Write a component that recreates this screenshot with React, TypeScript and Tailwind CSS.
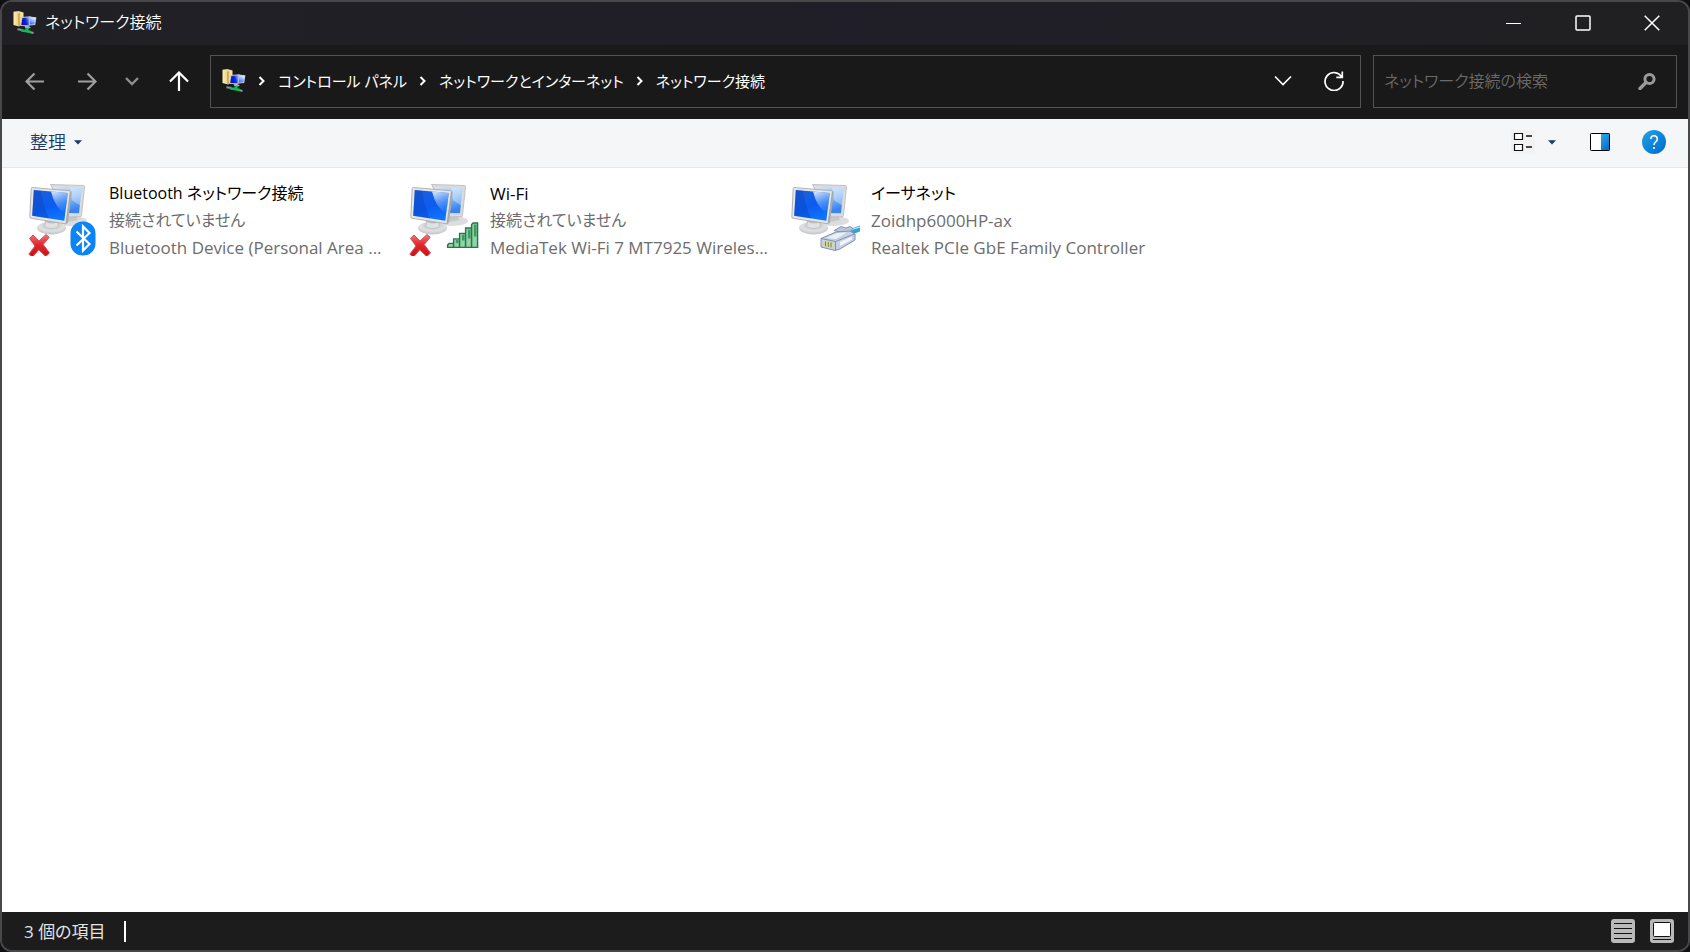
import type { ReactNode } from 'react';

function FolderNetworkIcon() {
  return (
    <svg viewBox="0 0 24 24" className="size-6 shrink-0" aria-hidden="true">
      <defs>
        <linearGradient id="fn-folder" x1="0" y1="0" x2="1" y2="0">
          <stop offset="0" stopColor="#fff0b4" />
          <stop offset="0.5" stopColor="#ecd084" />
          <stop offset="1" stopColor="#fbe9ab" />
        </linearGradient>
        <linearGradient id="fn-screen" x1="0" y1="0.6" x2="1" y2="0.3">
          <stop offset="0" stopColor="#0a10a0" />
          <stop offset="0.55" stopColor="#1226dc" />
          <stop offset="1" stopColor="#8fb2ff" />
        </linearGradient>
        <linearGradient id="fn-back" x1="0" y1="1" x2="0.4" y2="0">
          <stop offset="0" stopColor="#2f56e6" />
          <stop offset="1" stopColor="#d4e4ff" />
        </linearGradient>
      </defs>
      <path d="M.5.800 5.500 0l5 1.600v11L6 15.400.5 14z" fill="url(#fn-folder)" />
      <path d="M5.200 3 6.600 2l.2 12.600-1.400.4z" fill="#c79f47" />
      <path d="m16 5.600 7.400.6-1.200 7.800-6.200.4z" fill="#c4d2e8" />
      <path d="m16.500 6.600 6 .4-1 6.200-5 .4z" fill="url(#fn-back)" />
      <path d="m8.600 6 9-.8-1.200 9.600-9 .2z" fill="#b9c6e6" />
      <path d="m9.400 6.900 7.200-.6-1 7.600-7.300.2z" fill="url(#fn-screen)" />
      <path d="m11.500 15 4-.2 2.500 2-5.500.6z" fill="#a9b0b8" />
      <path d="m4.400 18.200 5 .8M15.500 20.800l5 1.200" stroke="#8a9499" strokeWidth="2" />
      <path d="m9 19.500 8 1.200" stroke="#0bbf55" strokeWidth="2.600" strokeLinecap="round" />
      <path d="m12.500 19.500 3.500-2.500" stroke="#0bbf55" strokeWidth="2" />
    </svg>
  );
}

function ComputersIcon({ id, children }: { id: string; children: ReactNode }) {
  return (
    <svg viewBox="0 0 76 76" className="size-19 shrink-0" aria-hidden="true">
      <defs>
        <linearGradient id={`${id}-screen`} x1="0.1" y1="0" x2="0.5" y2="1">
          <stop offset="0" stopColor="#1d5fdc" />
          <stop offset="0.6" stopColor="#0c5cf0" />
          <stop offset="1" stopColor="#0e74ff" />
        </linearGradient>
        <linearGradient id={`${id}-glare`} x1="0.2" y1="0" x2="0.5" y2="1">
          <stop offset="0" stopColor="#e4f1ff" stopOpacity="0.9" />
          <stop offset="0.9" stopColor="#6aaeff" stopOpacity="0.25" />
          <stop offset="1" stopColor="#6aaeff" stopOpacity="0" />
        </linearGradient>
        <linearGradient id={`${id}-back`} x1="0" y1="0" x2="0.4" y2="1">
          <stop offset="0" stopColor="#d4eafd" />
          <stop offset="0.5" stopColor="#8fc2fb" />
          <stop offset="1" stopColor="#3b83ee" />
        </linearGradient>
        <radialGradient id={`${id}-base`} cx="0.5" cy="0.3" r="0.7">
          <stop offset="0" stopColor="#b4b6b8" />
          <stop offset="0.6" stopColor="#e0e1e2" />
          <stop offset="1" stopColor="#bfc1c3" />
        </radialGradient>
      </defs>
      <g transform="translate(0 1)">
        <ellipse cx="43" cy="40" rx="16" ry="5" fill="#dcdddf" />
        <path d="m38 33 9-1 3 7-10 2z" fill="#c6c8ca" />
        <path d="m22.500 3.500 33 1q1.200 0 1 1.500L53.500 34.500q-.2 1.200-1.400 1.200L39 36z" fill="#d9dbdc" stroke="#b5b8ba" strokeWidth="0.800" />
        <path d="m25 6 28.500 1.200-2.500 25L38 32z" fill={`url(#${id}-back)`} />
        <path d="m42 6.700 11.500.5-1.600 17-8-5z" fill="#fff" opacity="0.350" />
        <ellipse cx="23.500" cy="47" rx="14.500" ry="6.500" fill={`url(#${id}-base)`} />
        <path d="m17 38 13 1 .5 7q-6 3.500-14 0z" fill="#bdbfc1" />
        <path d="M18 41q7 3 11 0l1 4.500q-6 3-13 0z" fill="#e0e1e2" />
        <path d="m4.500 6.500 37.500 3.300q1.400.2 1.200 1.700L39.500 41.500q-.2 1.400-1.700 1.300L3 37.300q-1.300-.2-1.200-1.500L3.200 7.700Q3.300 6.500 4.500 6.500z" fill="#e5e6e6" stroke="#a9acae" strokeWidth="0.900" />
        <path d="m42 10 1.400 1.500L39.500 41.500l-2 1.200z" fill="#a6a9ac" />
        <path d="m5.800 9 34 3-3.500 27.800L4.200 34.800z" fill={`url(#${id}-screen)`} />
        <path d="M5.800 9 13 9.700Q15 24 21 37.400L4.200 34.800z" fill="#0a3fb8" opacity="0.350" />
        <path d="m23 10.500 16.800 1.500-2.600 20.500Q27 27 23 10.500z" fill={`url(#${id}-glare)`} />
      </g>
      {children}
    </svg>
  );
}

function RedCross({ id }: { id: string }) {
  return (
    <g>
      <defs>
        <linearGradient id={`${id}-cross`} x1="0" y1="0" x2="0" y2="1">
          <stop offset="0" stopColor="#f0767a" />
          <stop offset="0.450" stopColor="#e2272c" />
          <stop offset="1" stopColor="#c80d16" />
        </linearGradient>
      </defs>
      <path
        d="m1.500 58.500 3.500-3.500 6 6 7-6.500 3.200 2.800-6 7.200 6.300 8.500-3.700 3.500-7-6.700L4.500 77l-3.700-2.800L7 66z"
        fill={`url(#${id}-cross)`}
        stroke="#c9555a"
        strokeWidth="1"
        strokeLinejoin="round"
      />
    </g>
  );
}

function BluetoothBadge() {
  return (
    <g>
      <rect x="42.500" y="41.500" width="25" height="34" rx="12" fill="#0a84f8" />
      <path d="m48.500 51.500 13 12.500-6.500 6.500V46.500l6.500 6.500-13 12.500" fill="none" stroke="#fff" strokeWidth="2.200" />
    </g>
  );
}

function SignalBadge() {
  return (
    <g fill="#8fd3a6" stroke="#27764a" strokeWidth="1.400" transform="translate(0 -2)">
      <path d="M38.600 69.400V67l1.500-1.600h4.500v4z" />
      <path d="M44.600 69.400v-8.500h6v8.500z" />
      <path d="M50.600 69.400v-14h6v14z" />
      <path d="M56.600 69.400V50h6v19.400z" />
      <path d="M62.600 69.400V46.500l1.500-1.500h4.500v24.400z" />
      <path d="M48.200 62v3M54.200 56.500v6M60.200 51.500v9M66.200 46.500v12" stroke="#3f9a66" strokeWidth="2.600" />
    </g>
  );
}

function CableBadge() {
  return (
    <g strokeLinejoin="round" transform="translate(0 -1)">
      <path d="M56 53q7-5 14-6.500v6q-6 1.500-10 5z" fill="#2fa5d6" />
      <path d="M58 52.500q6-3.500 12-4.500" stroke="#a8e2f5" strokeWidth="1.600" fill="none" />
      <path d="m44 51.500 7-4 5 1.500 4-1.500 3 2-5 6z" fill="#b9c6da" stroke="#7f8ea9" strokeWidth="0.900" />
      <path d="m31 59.500 15-6.500 14-1 5 3v6L50 70l-5 1.500L31 68z" fill="#c5d1e3" stroke="#8291ad" strokeWidth="1" />
      <path d="m31 59.500 14.500 3L64.500 55M45.500 62.500V71" stroke="#8291ad" strokeWidth="1" fill="none" />
      <path d="m36 59 11-5 10-.5-11 6.500z" fill="#eaf0f8" />
      <path d="m50 63 12-5.500v3L50 67z" fill="#f2f6fb" />
      <path d="m33 62 10.500 2v5L33 66.500z" fill="#ddd98c" />
      <path d="M35.500 62.500v4.700M38.300 63v4.800M41 63.500v4.800" stroke="#7d7c48" strokeWidth="1" />
    </g>
  );
}

function Chevron() {
  return (
    <svg viewBox="0 0 8 12" className="h-3 w-2 shrink-0" aria-hidden="true">
      <path d="m1.500 2 4 4-4 4" fill="none" stroke="#fff" strokeWidth="2" />
    </svg>
  );
}

function Caret() {
  return (
    <svg viewBox="0 0 8 5" className="h-[5px] w-2" aria-hidden="true">
      <path d="M0 .3h8L4 4.500z" fill="#1e3a66" />
    </svg>
  );
}

const connections = [
  {
    id: 'bluetooth',
    name: 'Bluetooth ネットワーク接続',
    nameSize: 'text-[16px]',
    status: '接続されていません',
    statusSize: 'text-[16px]',
    device: 'Bluetooth Device (Personal Area ...',
    badge: <><RedCross id="bluetooth" /><BluetoothBadge /></>,
  },
  {
    id: 'wifi',
    name: 'Wi-Fi',
    nameSize: 'text-[17px]',
    status: '接続されていません',
    statusSize: 'text-[16px]',
    device: 'MediaTek Wi-Fi 7 MT7925 Wireles...',
    badge: <><RedCross id="wifi" /><SignalBadge /></>,
  },
  {
    id: 'ethernet',
    name: 'イーサネット',
    nameSize: 'text-[16px]',
    status: 'Zoidhp6000HP-ax',
    statusSize: 'text-[17px]',
    device: 'Realtek PCIe GbE Family Controller',
    badge: <CableBadge />,
  },
];

const crumbs = ['コントロール パネル', 'ネットワークとインターネット', 'ネットワーク接続'];

export default function App() {
  return (
    <div className="h-screen bg-[#101012] font-['Open_Sans','Noto_Sans_CJK_JP',sans-serif] text-[17px] leading-[27px] [font-feature-settings:'palt']">
      <div className="flex h-full flex-col overflow-hidden rounded-xl border-2 border-[#48484a] bg-[#191919]">
        <header className="flex h-[43px] shrink-0 items-center bg-linear-to-r from-[#202024] via-[#201f29] to-[#202022] pr-[2px] pb-[2px] pl-[11px] text-[16px] text-white">
          <FolderNetworkIcon />
          <h1 className="ml-2 grow font-[350]">ネットワーク接続</h1>
          <button type="button" aria-label="最小化" className="flex h-full w-[69px] items-center justify-center">
            <svg viewBox="0 0 16 16" className="size-4"><path d="M0 8.500h15" stroke="#fff" /></svg>
          </button>
          <button type="button" aria-label="最大化" className="flex h-full w-[69px] items-center justify-center">
            <svg viewBox="0 0 16 16" className="size-4"><rect x="1" y="1" width="14" height="14" rx="1" fill="none" stroke="#fff" strokeWidth="1.500" /></svg>
          </button>
          <button type="button" aria-label="閉じる" className="flex h-full w-[69px] items-center justify-center">
            <svg viewBox="0 0 16 16" className="size-4"><path d="m.7.700 14.600 14.600M15.300.7.700 15.300" stroke="#fff" strokeWidth="1.500" /></svg>
          </button>
        </header>

        <nav className="flex h-[74px] shrink-0 items-center pr-[11px] pb-[2px] pl-[23px] text-white" aria-label="ナビゲーション">
          <button type="button" aria-label="戻る">
            <svg viewBox="0 0 20 20" className="size-5"><path d="M19 10.500H2M9.500 2.500l-8 8 8 8" fill="none" stroke="#a0a0a0" strokeWidth="2.200" /></svg>
          </button>
          <button type="button" aria-label="進む" className="ml-8">
            <svg viewBox="0 0 20 20" className="size-5"><path d="M1 10.500h17M10.500 2.500l8 8-8 8" fill="none" stroke="#a0a0a0" strokeWidth="2.200" /></svg>
          </button>
          <button type="button" aria-label="最近表示した場所" className="ml-7">
            <svg viewBox="0 0 14 10" className="h-[10px] w-[14px]"><path d="m1 2 6 6 6-6" fill="none" stroke="#8f8f8f" strokeWidth="2.400" /></svg>
          </button>
          <button type="button" aria-label="上へ" className="ml-[30px]">
            <svg viewBox="0 0 20 20" className="size-5"><path d="M10 20V2M1 10.500l9-9 9 9" fill="none" stroke="#fff" strokeWidth="2.200" /></svg>
          </button>
          <div className="ml-[21px] flex h-[53px] grow items-center border border-[#535353] pl-[11px]">
            <FolderNetworkIcon />
            <ol className="flex grow items-center text-[15px]">
              {crumbs.map((crumb) => (
                <li key={crumb} className="flex items-center">
                  <span className="flex w-8 justify-center"><Chevron /></span>
                  <a href="#">{crumb}</a>
                </li>
              ))}
            </ol>
            <button type="button" aria-label="以前の場所">
              <svg viewBox="0 0 18 12" className="h-3 w-[18px]"><path d="m1 1.500 8 8 8-8" fill="none" stroke="#fff" strokeWidth="1.600" /></svg>
            </button>
            <button type="button" aria-label="最新の情報に更新" className="mr-4 ml-8">
              <svg viewBox="0 0 20 20" className="size-5"><path d="M17.800 6A9 9 0 1 0 19 10M18.300.5v5.800h-6" fill="none" stroke="#fff" strokeWidth="1.700" /></svg>
            </button>
          </div>
          <form role="search" className="ml-3 flex h-[53px] w-[304px] items-center border border-[#535353] pr-5 pl-[10px] text-[16px] font-[350]">
            <input
              type="text"
              aria-label="ネットワーク接続の検索"
              placeholder="ネットワーク接続の検索"
              className="min-w-0 grow bg-transparent outline-none placeholder:text-[#6b6b6b]"
            />
            <svg viewBox="0 0 18 18" className="size-[18px] shrink-0" aria-hidden="true">
              <circle cx="11.500" cy="7" r="4.600" fill="none" stroke="#9a9a9a" strokeWidth="3" />
              <path d="m8 10.500-6 6" stroke="#9a9a9a" strokeWidth="3.400" strokeLinecap="round" />
            </svg>
          </form>
        </nav>

        <div role="toolbar" className="flex h-[49px] shrink-0 items-center border-b border-[#e6e7e9] bg-[#f4f6f8] pr-[22px] pb-[2px] pl-7 text-[#1e3a66]">
          <button type="button" className="flex items-center gap-2 text-[18px] font-[350]">整理<Caret /></button>
          <div className="grow" />
          <button type="button" aria-label="表示方法の変更" className="bg-[#f2f2f2] p-[2px]">
            <svg viewBox="0 0 20 20" className="size-5">
              <path d="M1.500 1.500h8v6h-8zM1.500 12.500h8v6h-8z" fill="#fff" stroke="#111" strokeWidth="1.200" />
              <path d="M13 4h6M13 15h6" stroke="#111" strokeWidth="1.400" />
            </svg>
          </button>
          <button type="button" aria-label="その他のオプション" className="ml-[13px] flex h-6 items-center"><Caret /></button>
          <button type="button" aria-label="プレビュー ウィンドウ" className="ml-[33px]">
            <svg viewBox="0 0 22 20" className="h-5 w-[22px]">
              <defs>
                <linearGradient id="pane" x1="0" y1="0" x2="0.500" y2="1">
                  <stop offset="0" stopColor="#28aee9" />
                  <stop offset="1" stopColor="#0a72d0" />
                </linearGradient>
              </defs>
              <rect x="1.500" y="1.500" width="19" height="17" rx="0.800" fill="#fff" />
              <path d="M12 1.500h8.500v17H12z" fill="url(#pane)" />
              <rect x="1.500" y="1.500" width="19" height="17" rx="0.800" fill="none" stroke="#000" />
            </svg>
          </button>
          <button type="button" aria-label="ヘルプ" className="ml-[31px] flex size-6 items-center justify-center rounded-full bg-linear-to-br from-[#22a2e6] to-[#0069cf]">
            <svg viewBox="0 0 24 24" className="size-6">
              <path d="M8.700 9a3.300 3.300 0 1 1 5.300 2.600c-1.300 1-2 1.600-2 3.400" fill="none" stroke="#fff" strokeWidth="1.600" />
              <circle cx="12" cy="18" r="1.100" fill="#fff" />
            </svg>
          </button>
        </div>

        <main className="grow bg-white pt-3 pl-[26px]">
          <ul className="flex flex-wrap">
            {connections.map((c) => (
              <li key={c.id} className="flex w-[381px] gap-[5px]">
                <ComputersIcon id={c.id}>{c.badge}</ComputersIcon>
                <div className="w-[290px] text-[#6d6d6d]">
                  <h2 className={`text-black ${c.nameSize}`}>{c.name}</h2>
                  <p className={c.statusSize}>{c.status}</p>
                  <p>{c.device}</p>
                </div>
              </li>
            ))}
          </ul>
        </main>

        <footer className="flex h-[38px] shrink-0 items-center bg-[#1c1c1c] pr-[14px] pl-[22px] text-[#e4e4e4]">
          <p>3 個の項目</p>
          <span className="ml-[18px] h-[21px] w-[2px] bg-white" />
          <div className="grow" />
          <button type="button" aria-label="詳細表示" className="mr-[15px]">
            <svg viewBox="0 0 24 24" className="size-6">
              <rect width="24" height="24" rx="3" fill="#b9b9b9" />
              <path d="M3 4.500h18M3 9.500h18M3 14.500h18M3 19.500h18" stroke="#111" />
            </svg>
          </button>
          <button type="button" aria-label="大きいアイコン表示">
            <svg viewBox="0 0 24 24" className="size-6">
              <rect width="24" height="24" rx="3" fill="#b9b9b9" />
              <rect x="3.500" y="3.500" width="17" height="14" rx="1" fill="#fff" stroke="#111" />
              <path d="M3 20.500h18" stroke="#111" />
            </svg>
          </button>
        </footer>
      </div>
    </div>
  );
}
